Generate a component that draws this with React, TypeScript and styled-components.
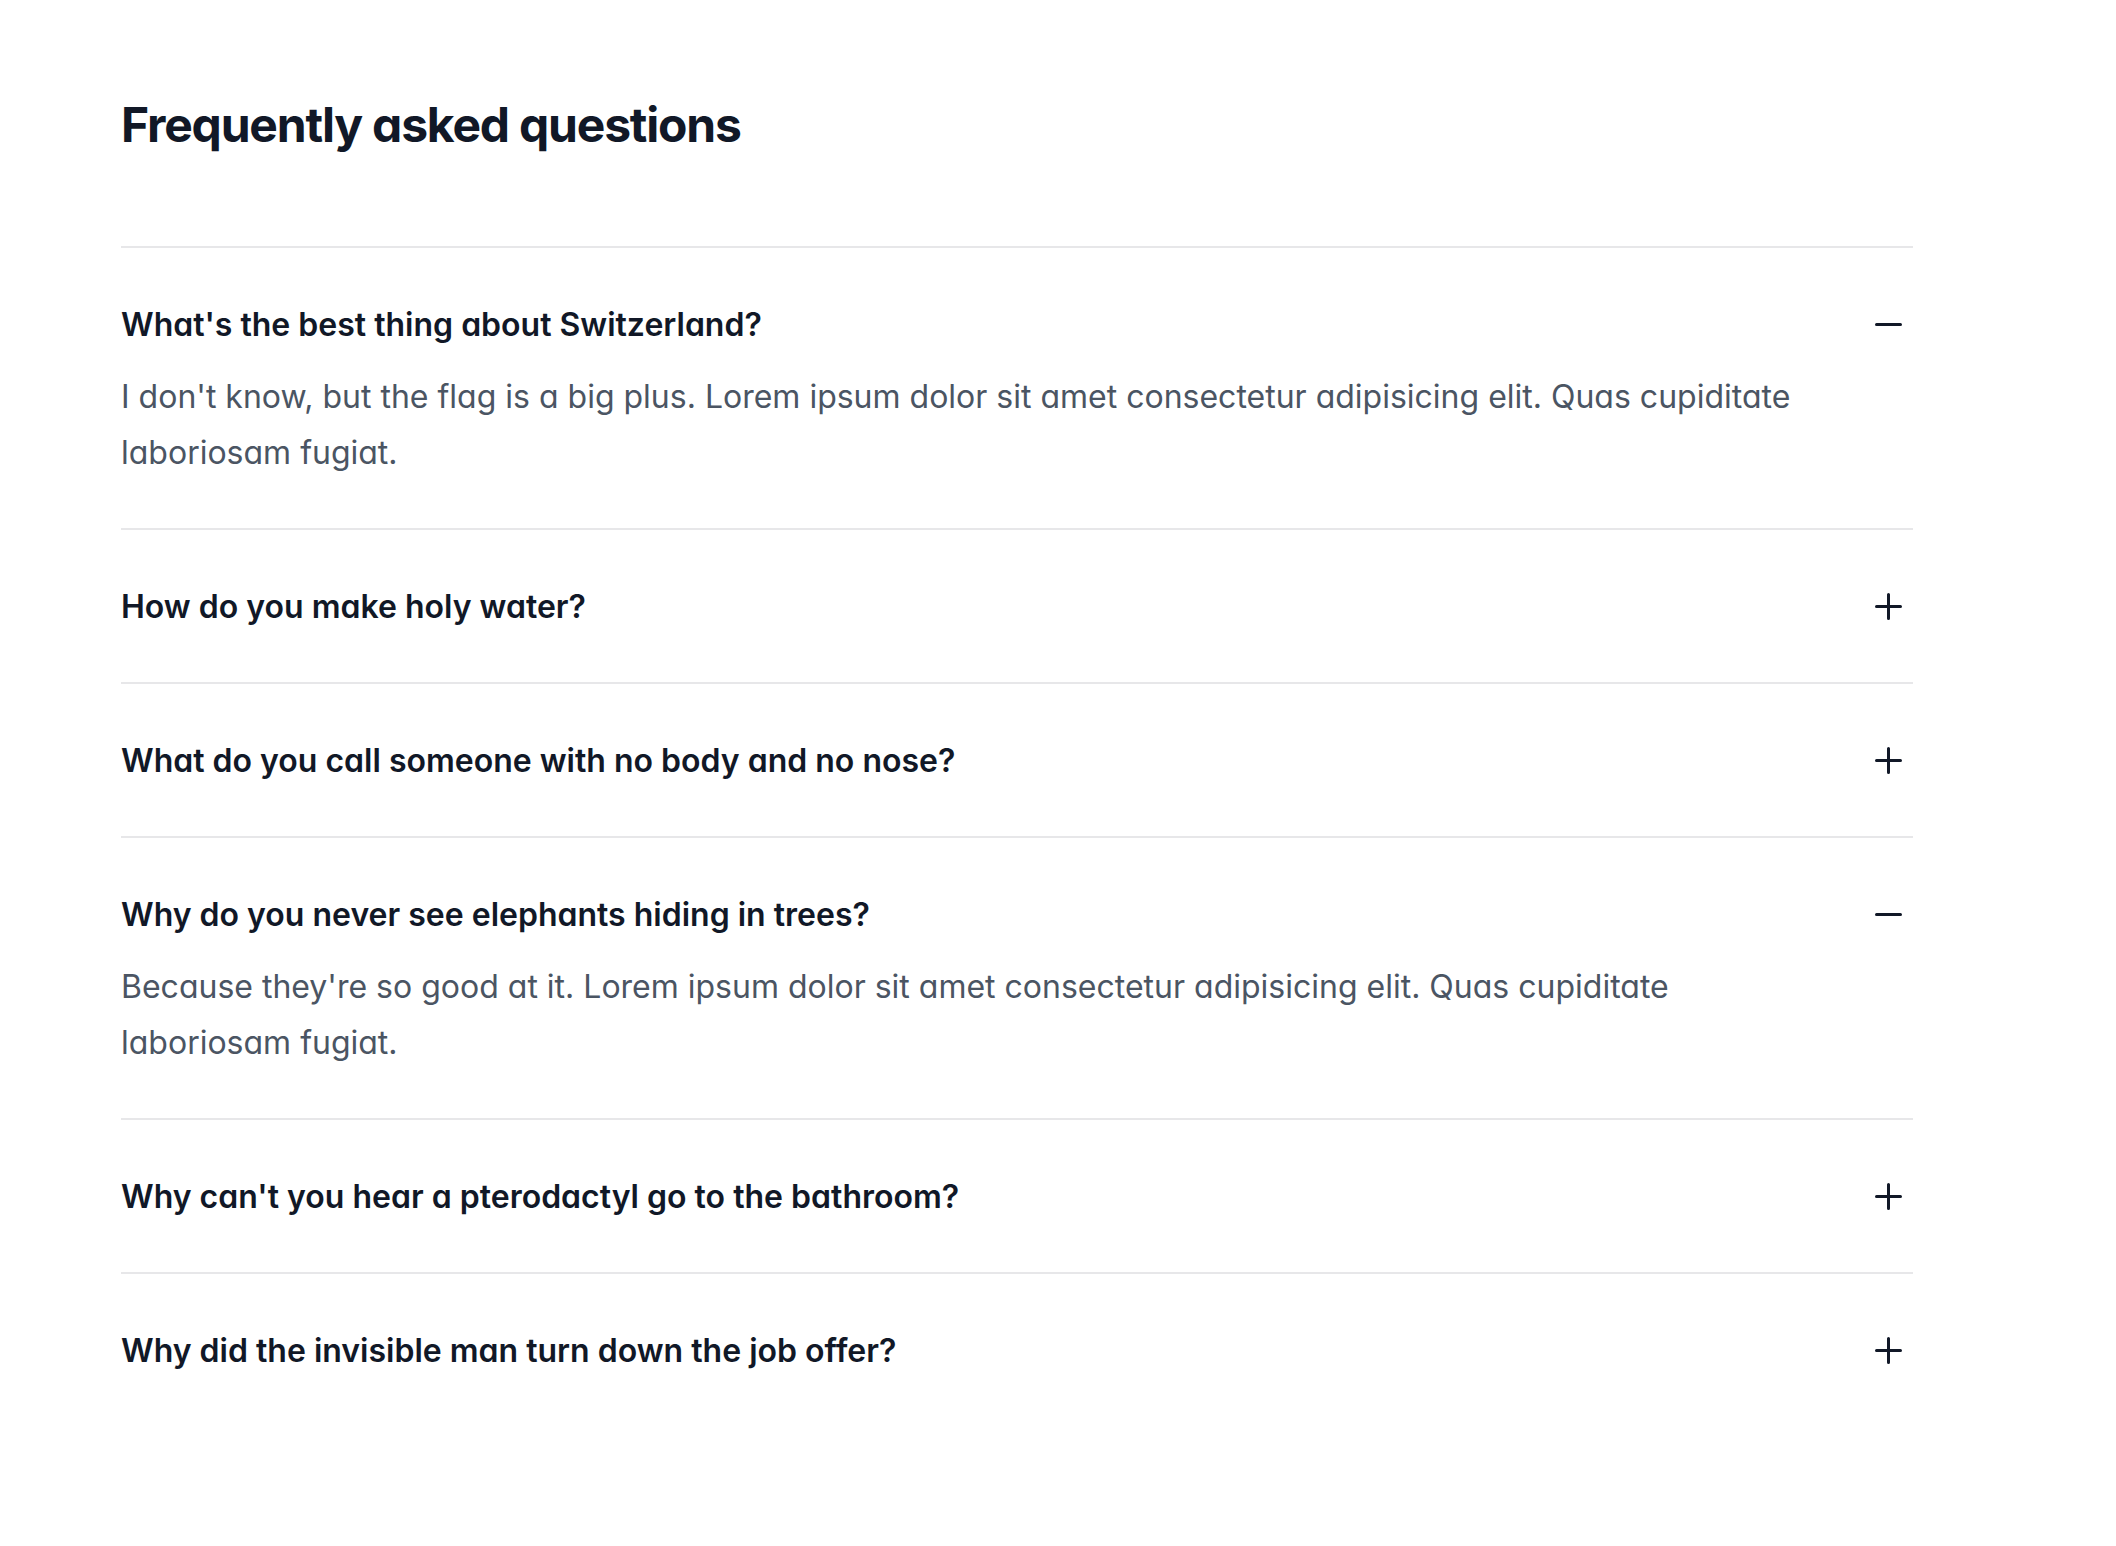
import React from "react";
import styled, { createGlobalStyle } from "styled-components";

const GlobalStyle = createGlobalStyle`
  html, body {
    margin: 0;
    padding: 0;
    background: #ffffff;
  }
  body {
    font-family: Inter, "Noto Sans", "Liberation Sans", sans-serif;
    font-feature-settings: "cv11";
    -webkit-font-smoothing: antialiased;
  }
`;

const Page = styled.main`
  padding: 85px 0 120px 121px;
`;

const Section = styled.section`
  width: 1792px;
`;

const Title = styled.h2`
  margin: 0;
  font-size: 48px;
  line-height: 80px;
  font-weight: 700;
  letter-spacing: -0.025em;
  color: #111827;
`;

const List = styled.dl`
  margin: 81px 0 0;
  border-top: 2px solid rgba(17, 24, 39, 0.1);
  display: flex;
  flex-direction: column;
  gap: 47px;
`;

const Item = styled.div<{ $first?: boolean }>`
  padding-top: 49px;
  border-top: ${(p) => (p.$first ? "none" : "2px solid rgba(17, 24, 39, 0.1)")};
`;

const Question = styled.dt`
  margin: 0;
`;

const QuestionButton = styled.button`
  display: flex;
  width: 100%;
  align-items: flex-start;
  justify-content: space-between;
  padding: 0;
  border: 0;
  background: none;
  text-align: left;
  color: #111827;
  font-family: inherit;
  font-feature-settings: "cv11";
  cursor: pointer;
`;

const QuestionText = styled.span`
  font-size: 32px;
  line-height: 56px;
  font-weight: 600;
`;

const IconWrap = styled.span`
  margin-left: 48px;
  display: flex;
  height: 56px;
  align-items: center;
`;

const Answer = styled.dd`
  margin: 16px 0 0;
  padding-right: 96px;
`;

const AnswerText = styled.p`
  margin: 0;
  font-size: 32px;
  line-height: 56px;
  color: #4b5563;
`;

const ToggleIcon = ({ open }: { open: boolean }) => (
  <svg width="48" height="48" viewBox="0 0 48 48" fill="none" aria-hidden="true">
    <path
      d={open ? "M11.5 23.5h24" : "M23.5 11.5v24M11.5 23.5h24"}
      stroke="#111827"
      strokeWidth="3"
      strokeLinecap="round"
    />
  </svg>
);

const faqs = [
  {
    q: "What's the best thing about Switzerland?",
    a: "I don't know, but the flag is a big plus. Lorem ipsum dolor sit amet consectetur adipisicing elit. Quas cupiditate laboriosam fugiat.",
    open: true,
  },
  { q: "How do you make holy water?", a: "", open: false },
  { q: "What do you call someone with no body and no nose?", a: "", open: false },
  {
    q: "Why do you never see elephants hiding in trees?",
    a: "Because they're so good at it. Lorem ipsum dolor sit amet consectetur adipisicing elit. Quas cupiditate laboriosam fugiat.",
    open: true,
  },
  { q: "Why can't you hear a pterodactyl go to the bathroom?", a: "", open: false },
  { q: "Why did the invisible man turn down the job offer?", a: "", open: false },
];

export default function App() {
  return (
    <>
      <GlobalStyle />
      <Page>
        <Section>
          <Title>Frequently asked questions</Title>
          <List>
            {faqs.map((f, i) => (
              <Item key={f.q} $first={i === 0}>
                <Question>
                  <QuestionButton type="button">
                    <QuestionText>{f.q}</QuestionText>
                    <IconWrap>
                      <ToggleIcon open={f.open} />
                    </IconWrap>
                  </QuestionButton>
                </Question>
                {f.open && (
                  <Answer>
                    <AnswerText>{f.a}</AnswerText>
                  </Answer>
                )}
              </Item>
            ))}
          </List>
        </Section>
      </Page>
    </>
  );
}
